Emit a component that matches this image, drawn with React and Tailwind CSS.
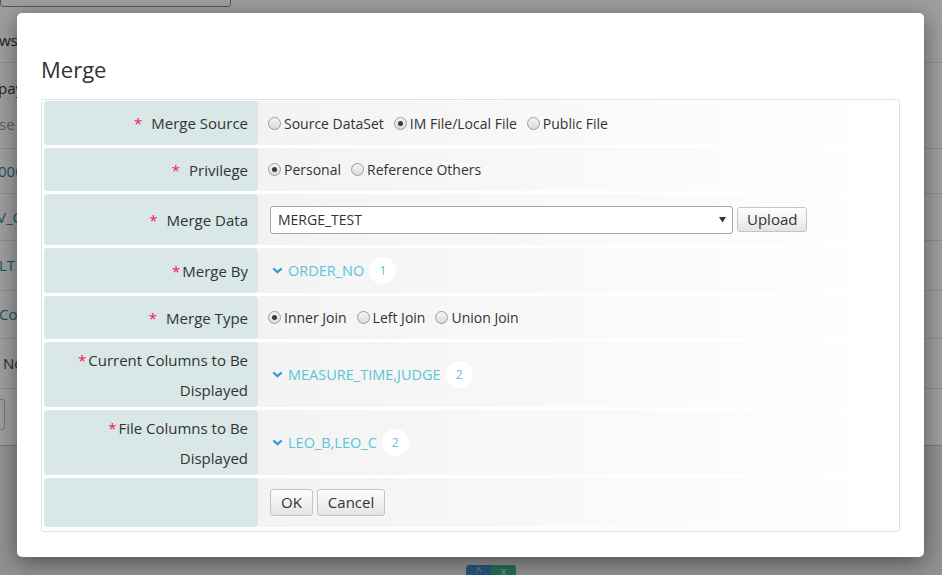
import React from 'react';

const labelCls =
  'w-[214px] shrink-0 bg-[#d9e7e7] rounded-[3px] pl-[10px] pr-[10px] flex items-center justify-end text-right text-[15px] leading-[30px] text-[#333]';
const valueCls =
  'flex-1 flex items-center pl-[10px] bg-linear-to-r from-[#f3f3f3] to-white text-[14px] text-[#333]';
const btnCls =
  'border border-[#c4c4c4] rounded-[3px] bg-linear-to-b from-white to-[#e4e4e4] text-[15px] text-[#333] leading-none flex items-center justify-center';

function Star({ space = true }) {
  return <span className={`text-[#ee1a5a] ${space ? 'mr-[9px]' : 'mr-[2px]'}`}>*</span>;
}

function Radio({ checked, label }) {
  return (
    <span className="flex items-center mr-[10px]">
      <span className="w-[13px] h-[13px] rounded-full border border-[#9c9c9c] bg-linear-to-b from-[#f6f6f6] to-[#dadada] flex items-center justify-center mr-[3px]">
        {checked && <span className="w-[5px] h-[5px] rounded-full bg-[#3a3a3a]" />}
      </span>
      <span>{label}</span>
    </span>
  );
}

function Chevron() {
  return (
    <svg width="11" height="7" viewBox="0 0 11 7" className="mr-[5px] ml-[4px]">
      <path d="M1.3 1.3 L5.5 5.2 L9.7 1.3" fill="none" stroke="#3a9fcb" strokeWidth="2.3" />
    </svg>
  );
}

function Picked({ text, count }) {
  return (
    <span className="flex items-center">
      <Chevron />
      <span className="text-[#5bc4d8] text-[14.5px]">{text}</span>
      <span className="ml-[5px] w-[27px] h-[27px] rounded-full bg-white flex items-center justify-center text-[12px] text-[#5bc4d8]">
        {count}
      </span>
    </span>
  );
}

function Row({ h, label, children }) {
  return (
    <div className={`flex ${h}`}>
      <div className={labelCls}>{label}</div>
      <div className={valueCls}>{children}</div>
    </div>
  );
}

function BackRow({ h, children, line = true }) {
  return (
    <div className={`${h} flex flex-col justify-center ${line ? 'border-b border-[#e2e2e2]' : ''}`}>
      {children}
    </div>
  );
}

export default function App() {
  return (
    <div className="relative w-[942px] h-[575px] overflow-hidden bg-white font-['Open_Sans',sans-serif]">
      {/* page behind the dialog */}
      <div className="flex flex-col h-full">
        <div className="w-[231px] h-[8px] -mt-[1px] border border-[#8c8c8c] rounded-b-[3px]" />
        <div className="h-[12px]" />
        <div className="text-[15px] text-[#333]">
          <BackRow h="h-[44px]">
            <span className="-ml-[1px]">ws</span>
          </BackRow>
          <BackRow h="h-[86px]">
            <span className="-ml-[2px] leading-[36px]">pay</span>
            <span className="-ml-[1px] leading-[36px] text-[#9a9a9a]">se</span>
          </BackRow>
          <BackRow h="h-[45px]">
            <span className="-ml-[2px] text-[#1d8f94]">000</span>
          </BackRow>
          <BackRow h="h-[47px]">
            <span className="-ml-[3px] text-[#1d8f94]">V_C</span>
          </BackRow>
          <BackRow h="h-[50px]">
            <span className="-ml-[1px] text-[#1d8f94]">LT</span>
          </BackRow>
          <BackRow h="h-[48px]">
            <span className="-ml-[1px] text-[#1d8f94]">Con</span>
          </BackRow>
          <BackRow h="h-[50px]">
            <span className="ml-[3px] text-[#444]">No</span>
          </BackRow>
          <div className="h-[57px] border-b border-[#c4c4c4] flex items-center">
            <div className="w-[5px] h-[31px] -mt-[6px] border border-l-0 border-[#bbb] rounded-r-[3px]" />
          </div>
        </div>
        <div className="flex-1 bg-[#eaeaea] flex items-end pl-[466px]">
          <div className="flex h-[10px]">
            <div className="w-[25px] bg-[#4289c4] rounded-tl-[3px] flex justify-center text-[10px] leading-[12px] text-[#cfe0ee]">^</div>
            <div className="w-[25px] bg-[#3fae90] rounded-tr-[3px] flex justify-center text-[10px] leading-[12px] text-[#cfeee5]">x</div>
          </div>
        </div>
      </div>

      {/* backdrop */}
      <div className="absolute inset-0 bg-black/[0.38]" />

      {/* dialog */}
      <div className="absolute left-[17px] top-[13px] w-[907px] h-[544px] bg-white rounded-[5px] shadow-[0_5px_22px_rgba(0,0,0,0.45)] px-[24px] pt-[41px]">
        <h2 className="text-[22px] leading-[30px] font-medium text-[#333] mb-[15px]">Merge</h2>
        <div className="border border-[#dde5e5] rounded-[3px] pt-[1px] px-[2px] pb-[4px] flex flex-col gap-[3px]">
          <Row h="h-[44px]" label={<span><Star />Merge Source</span>}>
            <Radio label="Source DataSet" />
            <Radio checked label="IM File/Local File" />
            <Radio label="Public File" />
          </Row>
          <Row h="h-[43px]" label={<span><Star />Privilege</span>}>
            <Radio checked label="Personal" />
            <Radio label="Reference Others" />
          </Row>
          <Row h="h-[51px]" label={<span><Star />Merge Data</span>}>
            <div className="ml-[2px] w-[463px] h-[28px] bg-white border border-[#a8a8a8] rounded-[3px] flex items-center justify-between pl-[7px] pr-[6px]">
              <span>MERGE_TEST</span>
              <svg width="7" height="7" viewBox="0 0 7 7">
                <path d="M0 1 H7 L3.5 6.5 Z" fill="#333" />
              </svg>
            </div>
            <button className={`${btnCls} ml-[4px] h-[25px] px-[9px]`}>Upload</button>
          </Row>
          <Row h="h-[45px]" label={<span><Star space={false} />Merge By</span>}>
            <Picked text="ORDER_NO" count="1" />
          </Row>
          <Row h="h-[43px]" label={<span><Star />Merge Type</span>}>
            <Radio checked label="Inner Join" />
            <Radio label="Left Join" />
            <Radio label="Union Join" />
          </Row>
          <Row h="h-[65px]" label={<span><Star space={false} />Current Columns to Be Displayed</span>}>
            <Picked text="MEASURE_TIME,JUDGE" count="2" />
          </Row>
          <Row h="h-[65px]" label={<span className="pl-[20px]"><Star space={false} />File Columns to Be Displayed</span>}>
            <Picked text="LEO_B,LEO_C" count="2" />
          </Row>
          <Row h="h-[49px]" label="">
            <div className="ml-[2px] flex gap-[4px]">
              <button className={`${btnCls} h-[27px] px-[10px]`}>OK</button>
              <button className={`${btnCls} h-[27px] px-[10px]`}>Cancel</button>
            </div>
          </Row>
        </div>
      </div>
    </div>
  );
}
